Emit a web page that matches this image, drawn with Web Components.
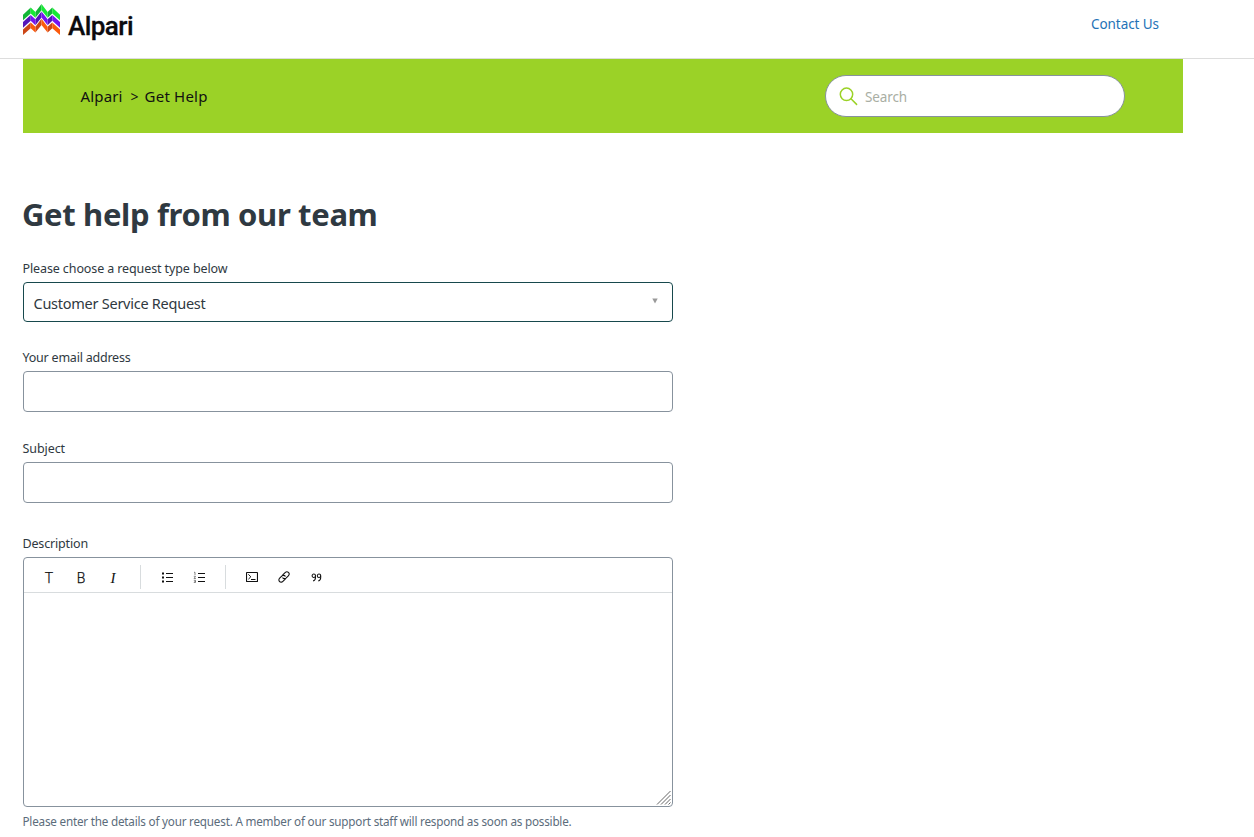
<!DOCTYPE html>
<html lang="en">
<head>
<meta charset="utf-8">
<title>Get help from our team – Alpari</title>
<style>
html, body { margin: 0; background: #fff; }
body { font-family: "Noto Sans", "Open Sans", sans-serif; color: #2f3941; height: 837px; overflow: hidden; }
</style>
</head>
<body>
<help-page></help-page>
<script>
const define = (name, html, setup) => customElements.define(name, class extends HTMLElement {
  connectedCallback() {
    if (this.shadowRoot) return;
    this.attachShadow({ mode: 'open' }).innerHTML = html;
    if (setup) setup(this, this.shadowRoot);
  }
});

/* One line of text whose tracking is adjusted to fill the given width. */
define('fit-text', `<style>
  :host { display: block; white-space: pre; }
  span { display: inline-block; }
</style><span><slot></slot></span>`, (el, root) => {
  const span = root.querySelector('span');
  const target = parseFloat(el.getAttribute('width'));
  const count = el.textContent.length;
  el.style.width = target + 'px';
  span.style.letterSpacing = '0px';
  const natural = span.getBoundingClientRect().width;
  if (natural) span.style.letterSpacing = ((target - natural) / count).toFixed(3) + 'px';
});

define('brand-logo', `<style>
  :host { display: flex; align-items: flex-start; gap: 7px; color: #0b0b0f; }
  svg { display: block; margin-top: 4px; }
  fit-text { font: 500 26px/30px Roboto, sans-serif; margin-top: 11px; -webkit-text-stroke: .3px; }
</style>
<svg width="38" height="32" viewBox="0 0 38 32">
  <defs>
    <path id="up" d="M0 10.7L7.7 3.6V9.4L0 16.3zM12.4 7.9L18.5 0V6.2L12.4 13.8zM24.6 7.9L29.3 3.6V9.4L24.6 13.8z"/>
    <path id="down" d="M7.7 3.6L12.4 7.9V13.8L7.7 9.4zM18.5 0L24.6 7.9V13.8L18.5 6.2zM29.3 3.6L37 10.7V16.3L29.3 9.4z"/>
  </defs>
  <use href="#up" fill="#12b636"/><use href="#down" fill="#17ea35"/>
  <use href="#up" y="7.4" fill="#5415b8"/><use href="#down" y="7.4" fill="#7414f0"/>
  <use href="#up" y="14.8" fill="#cc4616"/><use href="#down" y="14.8" fill="#fb5a0c"/>
</svg>
<fit-text width="65">Alpari</fit-text>`);

define('site-header', `<style>
  :host { display: flex; justify-content: space-between; height: 58px; padding: 0 95px 0 23px; border-bottom: 1px solid #ddd; }
  fit-text { font-size: 13.5px; line-height: 20px; margin-top: 14px; color: #1f73b7; }
</style>
<brand-logo></brand-logo><fit-text width="68">Contact Us</fit-text>`);

define('search-box', `<style>
  :host { display: flex; align-items: center; box-sizing: border-box; width: 300px; height: 42px; border: 1px solid #87929d; border-radius: 21px; background: #fff; padding-left: 13px; }
  svg { display: block; }
  fit-text { margin: 2px 0 0 7px; font-size: 13.5px; line-height: 20px; color: #a9aea3; }
</style>
<svg width="19" height="19" viewBox="0 0 19 19" fill="none" stroke="#9bd227" stroke-width="1.5" stroke-linecap="round"><circle cx="7.5" cy="7.3" r="6.2"/><path d="M12 11.8L17.6 17.4"/></svg>
<fit-text width="42">Search</fit-text>`);

define('crumb-bar', `<style>
  :host { display: flex; justify-content: space-between; align-items: center; box-sizing: border-box; width: 1160px; height: 74px; margin-left: 23px; padding: 0 58px 0 57.6px; background: #9bd227; }
  nav { display: flex; align-items: center; font-size: 15px; line-height: 22px; color: #111; }
  .sep { font-size: 14px; margin: 1px 5px 0 8px; }
</style>
<nav><fit-text width="42">Alpari</fit-text><fit-text class="sep" width="9">&gt;</fit-text><fit-text width="63">Get Help</fit-text></nav>
<search-box></search-box>`);

define('form-field', `<style>
  :host { display: block; }
  .label { font-size: 12.5px; line-height: 18px; margin: 0 0 4px -.5px; }
</style><fit-text class="label"></fit-text><slot></slot>`, (el, root) => {
  const old = root.querySelector('.label');
  const label = document.createElement('fit-text');
  label.className = 'label';
  label.setAttribute('width', el.getAttribute('label-width'));
  label.textContent = el.getAttribute('label');
  old.replaceWith(label);
});

define('text-input', `<style>
  :host { display: block; box-sizing: border-box; height: 41px; border: 1px solid #87929d; border-radius: 4px; }
</style>`);

define('select-input', `<style>
  :host { display: flex; justify-content: space-between; box-sizing: border-box; height: 40px; border: 1px solid #17494d; border-radius: 4px; padding: 0 14px 0 9.5px; font-size: 14.5px; line-height: 22px; }
  fit-text { margin-top: 9px; }
  svg { display: block; margin-top: 15px; }
</style>
<fit-text width="172">Customer Service Request</fit-text>
<svg width="6" height="6" viewBox="0 0 6 6" fill="#999"><path d="M.3 .5H5.7L3 5.6z"/></svg>`);

define('tool-button', `<style>
  :host { display: flex; align-items: center; justify-content: center; width: 32px; height: 34px; color: #111; font: 400 14px/16px Roboto, sans-serif; }
</style><slot></slot>`);

define('rich-editor', `<style>
  :host { display: flex; flex-direction: column; box-sizing: border-box; height: 250px; border: 1px solid #87929d; border-radius: 4px; }
  header { display: flex; align-items: center; height: 34px; padding: 0 9px; border-bottom: 1px solid #d8dcde; }
  tool-button { margin-top: 4px; }
  .glyph { margin-top: 6px; font-size: 14px; font-weight: 300; -webkit-text-stroke: .25px; }
  .it { margin-top: 6px; font: italic 15px/16px "Liberation Serif", serif; }
  hr { border: 0; width: 1px; height: 24px; margin: 4px 10px 0 11px; background: #d8dcde; }
  hr.second { margin-left: 10px; }
  svg { display: block; fill: none; stroke: #111; }
  .area { flex: 1; display: flex; justify-content: flex-end; align-items: flex-end; }
  .area svg { stroke: #666; }
</style>
<header>
  <tool-button class="glyph">T</tool-button><tool-button class="glyph">B</tool-button><tool-button class="it">I</tool-button>
  <hr>
  <tool-button><svg width="12" height="12"><path d="M5 2.5H12M5 6.5H12M5 10.5H12"/><path d="M1 2.5H3M1 6.5H3M1 10.5H3" stroke-width="2"/></svg></tool-button>
  <tool-button><svg width="12" height="12"><path d="M5 2.5H12M5 6.5H12M5 10.5H12"/><path d="M1 1.3H2V4M.8 5.3H2.5L1.1 7.5H2.9M.8 9.3H2.5V11.5H.8M1.3 10.4H2.5" stroke="#555" stroke-width=".7"/></svg></tool-button>
  <hr class="second">
  <tool-button><svg width="12" height="12"><rect x=".5" y="1.5" width="11" height="9" rx=".4" stroke-width="1.15"/><path d="M2.4 3.3L4.8 5.8L2.4 8.2M5 8.5H9.5"/></svg></tool-button>
  <tool-button><svg width="12" height="12" viewBox="0 0 13 13" stroke-width="1.2" stroke-linecap="round"><path d="M5.2 4.3L7.7 1.8C8.7 .8 10.2.5 11.3 1.6C12.4 2.7 12.2 4.2 11.2 5.2L8.7 7.7C7.7 8.6 6.1 8.5 5.2 7.4"/><path d="M7.8 8.7L5.3 11.2C4.3 12.2 2.8 12.5 1.7 11.4C.6 10.3.8 8.8 1.8 7.8L4.3 5.3C5.3 4.4 6.9 4.5 7.8 5.6"/></svg></tool-button>
  <tool-button><svg width="12" height="9" viewBox="-1.5 0 12 9" stroke-width="1.05"><circle cx="2.3" cy="2.7" r="1.7"/><path d="M4 2.7V4.6C4 6.4 3 7.7 1.6 8.1"/><circle cx="7.5" cy="2.7" r="1.7"/><path d="M9.2 2.7V4.6C9.2 6.4 8.2 7.7 6.8 8.1"/></svg></tool-button>
</header>
<div class="area"><svg width="16" height="16"><path d="M1 14.5L14.5 1M5 14.5L14.5 5M9 14.5L14.5 9M12.5 14.5L14.5 12.5"/></svg></div>`);

define('help-page', `<style>
  :host { display: block; width: 1254px; }
  main { width: 650px; padding-left: 23px; }
  h1 { margin: 59px 0 0 -1px; font-size: 31px; line-height: 44px; font-weight: 700; }
  .type { margin-top: 24px; }
  .email { margin-top: 27px; }
  .subject { margin-top: 28px; }
  .desc { margin-top: 32px; }
  .hint { margin: 5px 0 0 -.5px; font-size: 11.7px; line-height: 18px; color: #5b6c7b; }
</style>
<site-header></site-header>
<crumb-bar></crumb-bar>
<main>
  <h1><fit-text width="355.5">Get help from our team</fit-text></h1>
  <form-field class="type" label="Please choose a request type below" label-width="205"><select-input></select-input></form-field>
  <form-field class="email" label="Your email address" label-width="108"><text-input></text-input></form-field>
  <form-field class="subject" label="Subject" label-width="42.5"><text-input></text-input></form-field>
  <form-field class="desc" label="Description" label-width="65.5"><rich-editor></rich-editor></form-field>
  <fit-text class="hint" width="549">Please enter the details of your request. A member of our support staff will respond as soon as possible.</fit-text>
</main>`);
</script>
</body>
</html>
